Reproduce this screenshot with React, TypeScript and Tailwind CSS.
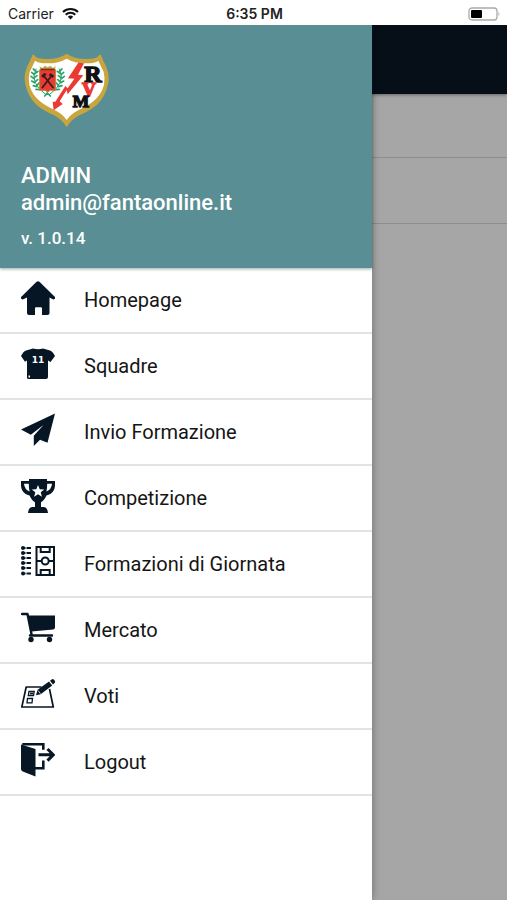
import { ReactNode } from "react";

interface IMenuItem {
  label: string;
  href: string;
  icon: ReactNode;
}

const MENU_ITEMS: IMenuItem[] = [
  {
    label: "Homepage",
    href: "#home",
    icon: (
      <path d="M15.3 1a2.4 2.4 0 0 1 3.4 0L33.500 15.400a1.700 1.700 0 0 1-2.200 2.700L28.500 16.500V32a2 2 0 0 1-2 2h-5.500v-6.800a1 1 0 0 0-1-1h-5a1 1 0 0 0-1 1V34H8a2 2 0 0 1-2-2V16.500l-3.200 1.600A1.700 1.700 0 0 1 .6 15.400z" />
    ),
  },
  {
    label: "Squadre",
    href: "#squadre",
    icon: (
      <>
        <path d="M12 1.500Q17 3 22 1.500L29 3.500Q31 4.200 32 5.800L34 9l-4.500 6-2.500-1.500V30a2 2 0 0 1-2 2H7.500a1.500 1.500 0 0 1-1.500-1.500V13.500L4 14.800 0 9l2-3.200Q3 4.200 5 3.500z" />
        <path d="M7.500 28.500h1.500v2H7.500z" fill="#fff" />
        <text
          x="17"
          y="16"
          textAnchor="middle"
          fill="#fff"
          className="font-['DejaVu_Sans',sans-serif] text-[9px] font-bold"
        >
          11
        </text>
      </>
    ),
  },
  {
    label: "Invio Formazione",
    href: "#invio",
    icon: (
      <path d="M34 0.500L0 16.500l9.800 5.200L22.500 12 12.800 22.800V33l6.200-6.300 7.500 3z" />
    ),
  },
  {
    label: "Competizione",
    href: "#competizione",
    icon: (
      <>
        <path d="M8 0h18v2h8v4c0 5-2.500 9-8.500 10.500C24 20 22 22 20 23.200V28h2.500q4 0 4.500 6H7q.5-6 4.500-6H14v-4.800C12 22 10 20 8.500 16.500 2.500 15 0 11 0 6V2h8z" />
        <path
          d="M3 4.800h4.800q0 4 .8 7.800Q3.500 10.500 3 4.800zM31 4.800h-4.800q0 4-.8 7.800Q30.500 10.500 31 4.800z"
          fill="#fff"
        />
        <path
          d="M17 6l1.700 4.200 4.500.3-3.500 2.800 1.200 4.400-3.900-2.500-3.900 2.500 1.200-4.400-3.500-2.800 4.500-.3z"
          fill="#fff"
        />
      </>
    ),
  },
  {
    label: "Formazioni di Giornata",
    href: "#formazioni",
    icon: (
      <>
        {[3, 8, 13, 18, 23, 28.500].map((y) => (
          <g key={y}>
            <circle cx="2" cy={y} r="2" />
            <path d={`M2 ${y}h2.500M5.500 ${y}h4.500`} stroke="currentColor" strokeWidth="1.800" />
          </g>
        ))}
        <path
          d="M15.500 2h17.500v28H15.500zM15.500 16h5M28 16h5M19.700 2v5h9V2M19.700 30v-5h9v5M20.700 16a3.500 3.500 0 1 0 7 0a3.500 3.500 0 1 0-7 0"
          fill="none"
          stroke="currentColor"
          strokeWidth="2"
        />
      </>
    ),
  },
  {
    label: "Mercato",
    href: "#mercato",
    icon: (
      <>
        <path d="M7 4.500h27v12a2 2 0 0 1-1.700 2L10.500 20.500z" />
        <path
          d="M1 3h5.500l4 20-1.500 1.500h22"
          fill="none"
          stroke="currentColor"
          strokeWidth="2.400"
          strokeLinecap="round"
          strokeLinejoin="round"
        />
        <circle cx="10" cy="28.500" r="2.700" />
        <circle cx="28.500" cy="28.500" r="2.700" />
      </>
    ),
  },
  {
    label: "Voti",
    href: "#voti",
    icon: (
      <>
        <path
          d="M20.500 10H5.200L.8 30h31.500L28.500 12"
          fill="none"
          stroke="currentColor"
          strokeWidth="1.700"
          strokeLinejoin="round"
        />
        <path
          d="M8 14.500h5.200l-.7 4H7.300zM6.500 21.500h5l-.5 4.300H6zM9 16.500h3"
          fill="none"
          stroke="currentColor"
          strokeWidth="1.300"
        />
        <path d="M15 18.200l1.600-5.400L28 4.500l3.200 4.100-11.500 8.600zM29 3.700l1.700-1.300q1.300-.8 2.300.4l.8 1q.8 1.300-.3 2.300l-1.500 1.500z" />
        <path d="M17 13.500l2.500 3.200" stroke="#fff" strokeWidth=".8" />
      </>
    ),
  },
  {
    label: "Logout",
    href: "#logout",
    icon: (
      <>
        <path d="M0 1.500L14.500 6v27.500L1.800 28.500Q0 27.800 0 26z" />
        <path
          d="M1.300 1.200h21v5.500M22.300 17.500v7.700H14"
          fill="none"
          stroke="currentColor"
          strokeWidth="2.600"
        />
        <path
          d="M17.500 11.800H32M26.500 6l5.800 5.800-5.800 5.800"
          fill="none"
          stroke="currentColor"
          strokeWidth="3"
        />
      </>
    ),
  },
];

function StatusBar() {
  return (
    <div className="grid h-[25px] grid-cols-3 items-center bg-white pl-2 pr-[6px] pt-[2px] font-[Inter,sans-serif] text-sm text-[#222]">
      <div className="flex items-center gap-2">
        <span>Carrier</span>
        <svg viewBox="0 0 17 13" className="h-[13px] w-[17px]" aria-hidden="true">
          <path
            d="M1 5a10.800 10.800 0 0 1 15 0M3.700 7.700a7 7 0 0 1 9.600 0"
            fill="none"
            stroke="#111"
            strokeWidth="2.100"
          />
          <path d="M5.800 9.700a4 4 0 0 1 5.400 0L8.500 12.500z" fill="#111" />
        </svg>
      </div>
      <span className="text-center font-semibold">6:35 PM</span>
      <svg viewBox="0 0 33 14" className="h-[14px] w-[33px] justify-self-end" aria-hidden="true">
        <rect x="1" y="1" width="28" height="12" rx="3" fill="none" stroke="#aaa" strokeWidth="1.300" />
        <rect x="3" y="3" width="11" height="8" rx="1" fill="#000" />
        <path d="M30.500 5q2 2 0 4z" fill="#aaa" />
      </svg>
    </div>
  );
}

function Crest() {
  return (
    <svg viewBox="0 0 258 225" className="h-[75px] w-[86px]" role="img" aria-label="Club crest">
      <path
        d="M30 5Q36 18 65 18Q102 20 128 2Q154 20 191 18Q220 18 226 5L230 5Q239 26 247 42Q258 68 252 94Q244 132 218 156Q198 173 166 187Q142 199 128 222Q114 199 90 187Q58 173 38 156Q12 132 4 94Q-2 68 9 42Q17 26 26 5z"
        fill="#c9a63d"
      />
      <path
        d="M33 23Q46 32 70 31Q104 31 128 17Q152 31 186 31Q210 32 223 23Q232 43 239 57Q244 76 240 96Q232 125 208 145Q190 160 160 173Q139 184 128 201Q117 184 96 173Q66 160 48 145Q24 125 16 96Q12 76 17 57Q24 43 33 23z"
        fill="#fff"
      />
      <g fill="none" stroke="#2aa36b" strokeLinecap="round">
        <path d="M36 48Q14 88 66 125M106 48Q128 88 76 125" strokeWidth="3" />
        <path
          d="M36 55l-8-7M31 65l-8-7M30 77l-9-7M32 89l-9-5M38 101l-10-3M46 110l-10-1M34 61l8-6M31 74l8-6M34 86l7-6M39 97l6-7M106 55l8-7M111 65l8-7M112 77l9-7M110 89l9-5M104 101l10-3M96 110l10-1M108 61l-8-6M111 74l-8-6M108 86l-7-6M103 97l-6-7M62 129l8-9 9 9"
          strokeWidth="5"
        />
      </g>
      <path d="M46 40l4 10h42l4-10-9 5-8-7-8 5-8-5-8 7z" fill="#c9a63d" />
      <path d="M47 50h48v62H79l-8 5-8-5H47z" fill="#e63c32" stroke="#b7863a" strokeWidth="3" />
      <path d="M50 47h42v5H50z" fill="#792f23" />
      <path d="M54 105l31-40M88 105L57 65" stroke="#36191c" strokeWidth="5" />
      <path d="M51 69l10-9 7 4-10 11zM80 61l11 8-5 6-12-9z" fill="#36191c" />
      <path
        d="M163 29L180 31 162 65 178 67 131 124 128 111 107 145 116 153 89 172 86 146 94 146 124 99 131 106 151 77 132 76z"
        fill="#ed3933"
      />
      <g className="font-['Liberation_Serif',serif] font-bold" strokeWidth="4">
        <text x="181" y="88" fill="#111" stroke="#111" fontSize="72">
          R
        </text>
        <text x="174" y="130" fill="#ed3933" stroke="#ed3933" fontSize="58">
          V
        </text>
        <text x="146" y="163" fill="#111" stroke="#111" fontSize="52">
          M
        </text>
      </g>
    </svg>
  );
}

function DrawerHeader() {
  return (
    <header className="h-[243px] bg-[#598f94] px-[21px] pt-7 font-medium text-white shadow-[0_1px_3px_rgba(0,40,40,0.4)]">
      <div className="pl-[3px]">
        <Crest />
      </div>
      <div className="mt-[34px] text-[22px] leading-[27px]">
        <p>ADMIN</p>
        <p>admin@fantaonline.it</p>
      </div>
      <p className="mt-3 text-[17px] leading-5">v. 1.0.14</p>
    </header>
  );
}

function App() {
  return (
    <div className="relative flex min-h-screen flex-col bg-[#a6a6a6] font-[Roboto,sans-serif]">
      <StatusBar />
      <div className="relative flex flex-1 flex-col overflow-hidden">
        <div className="h-[69px] bg-[#060f18] shadow-[0_1px_3px_rgba(0,0,0,0.4)]" />
        <div className="h-16 border-b border-[#8c8f8f]" />
        <div className="h-[66px] border-b border-[#8c8f8f]" />

        <aside className="absolute inset-y-0 left-0 w-[372px] max-w-[80%] bg-white shadow-[0_0_8px_rgba(0,0,0,0.35)]">
          <DrawerHeader />
          <nav>
            <ul>
              {MENU_ITEMS.map((item) => (
                <li key={item.label} className="border-b-2 border-[#e1e4e4]">
                  <a
                    href={item.href}
                    className="flex h-16 items-center gap-[29px] px-[21px] pb-1 text-xl text-[#151515]"
                  >
                    <svg
                      viewBox="0 0 34 34"
                      className="h-[34px] w-[34px] shrink-0 text-[#071625]"
                      fill="currentColor"
                      aria-hidden="true"
                    >
                      {item.icon}
                    </svg>
                    <span className="pt-1">{item.label}</span>
                  </a>
                </li>
              ))}
            </ul>
          </nav>
        </aside>
      </div>
    </div>
  );
}

export default App;
